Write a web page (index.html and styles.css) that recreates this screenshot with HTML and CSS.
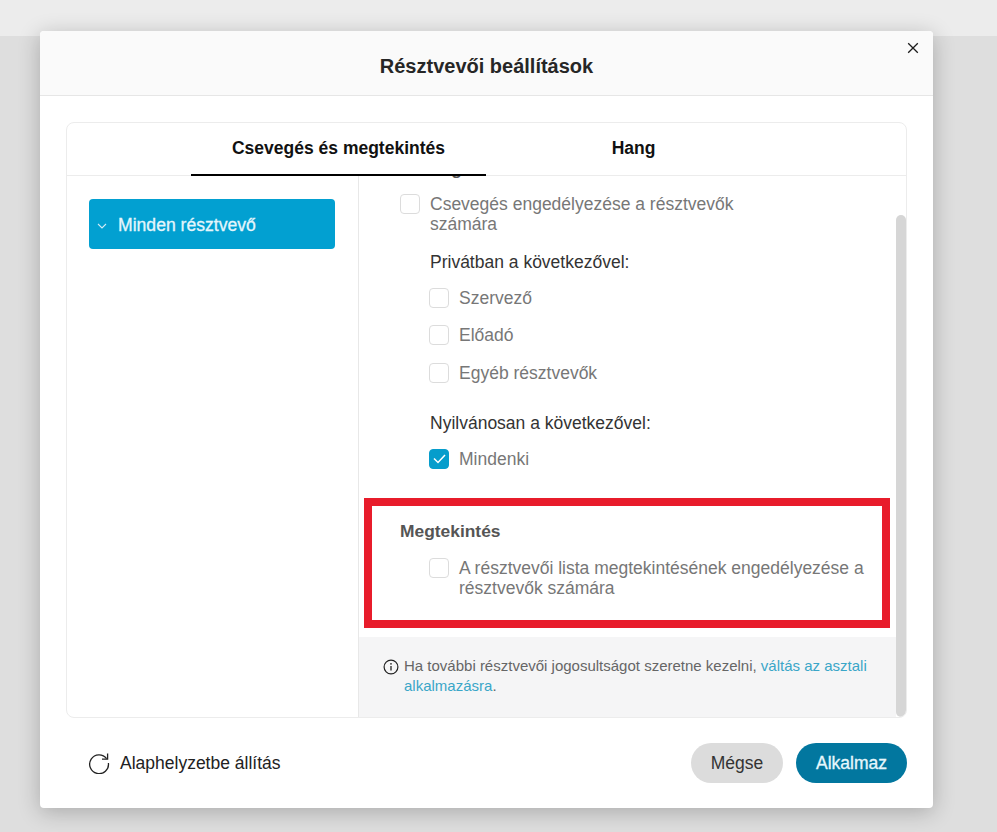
FILE: index.html
```html
<!DOCTYPE html>
<html lang="hu">
<head>
<meta charset="utf-8">
<title>Résztvevői beállítások</title>
<link rel="stylesheet" href="styles.css">
</head>
<body>
<div class="topbar"></div>
<div class="modal">
  <header class="modal-head">
    <h1>Résztvevői beállítások</h1>
    <button class="close" aria-label="Bezárás">
      <svg width="12" height="12" viewBox="0 0 12 12"><path d="M1.2 1.2 10.8 10.8M10.8 1.2 1.2 10.8" stroke="#1c1c1c" stroke-width="1.3" fill="none"/></svg>
    </button>
  </header>
  <div class="modal-body">
    <div class="card">
      <nav class="tabs">
        <div class="tab tab-active">Csevegés és megtekintés</div>
        <div class="tab tab-plain">Hang</div>
      </nav>
      <div class="panes">
        <aside class="side">
          <div class="side-item">
            <svg class="chev" width="10" height="6" viewBox="0 0 10 6"><path d="M1 1 5 5 9 1" stroke="#cfeaf5" stroke-width="1.1" fill="none"/></svg>
            <span>Minden résztvevő</span>
          </div>
        </aside>
        <section class="main">
          <div class="scroll">
            <div class="clip-strip"><h2 class="sec-title sec-clipped">Csevegés</h2></div>
            <label class="check check-top"><i class="box"></i><span class="narrow">Csevegés engedélyezése a résztvevők számára</span></label>
            <div class="group">
              <p class="group-title">Privátban a következővel:</p>
              <label class="check"><i class="box"></i><span>Szervező</span></label>
              <label class="check"><i class="box"></i><span>Előadó</span></label>
              <label class="check"><i class="box"></i><span>Egyéb résztvevők</span></label>
            </div>
            <div class="group group-2">
              <p class="group-title">Nyilvánosan a következővel:</p>
              <label class="check"><i class="box box-on"><svg width="15" height="13" viewBox="0 0 15 13"><path d="M2 6.5 6 10.5 13 3" stroke="#fff" stroke-width="1.5" fill="none"/></svg></i><span>Mindenki</span></label>
            </div>
            <h2 class="sec-title sec-view">Megtekintés</h2>
            <label class="check check-view"><i class="box"></i><span>A résztvevői lista megtekintésének engedélyezése a résztvevők számára</span></label>
            <div class="note">
              <svg class="info" width="16" height="16" viewBox="0 0 16 16"><circle cx="8" cy="8" r="6.9" stroke="#222" stroke-width="1.2" fill="none"/><path d="M8 7v4.6" stroke="#222" stroke-width="1.3"/><circle cx="8" cy="4.8" r=".85" fill="#222"/></svg>
              <p>Ha további résztvevői jogosultságot szeretne kezelni, <a href="#">váltás az asztali alkalmazásra</a>.</p>
            </div>
          </div>
          <div class="scrollbar"></div>
        </section>
      </div>
    </div>
  </div>
  <footer class="modal-foot">
    <div class="reset">
      <svg width="22" height="22" viewBox="0 0 22 22"><path d="M18.6 6.6A9.4 9.4 0 1 0 20.4 11" stroke="#222" stroke-width="1.3" fill="none"/><path d="M19.6 1.6v5.6h-5.6" stroke="#222" stroke-width="1.3" fill="none"/></svg>
      <span>Alaphelyzetbe állítás</span>
    </div>
    <div class="actions">
      <button class="btn btn-cancel">Mégse</button>
      <button class="btn btn-apply">Alkalmaz</button>
    </div>
  </footer>
</div>
<div class="highlight"></div>
</body>
</html>
```
FILE: styles.css
```css
* { box-sizing: border-box; }
html, body { margin: 0; height: 100%; }
body {
  height: 832px;
  overflow: hidden;
  background: #dedede;
  font-family: "Liberation Sans", Arial, sans-serif;
  color: #222;
  position: relative;
}
.topbar { height: 36px; background: #ececec; }
.modal {
  position: absolute;
  left: 40px;
  top: 31px;
  width: 893px;
  height: 777px;
  background: #fff;
  border-radius: 4px;
  box-shadow: 0 4px 22px rgba(0, 0, 0, .24);
  display: flex;
  flex-direction: column;
}
.modal-head {
  height: 65px;
  flex: none;
  background: #fafafa;
  border-bottom: 1px solid #e6e6e6;
  border-radius: 4px 4px 0 0;
  display: flex;
  align-items: center;
  justify-content: center;
  padding-top: 6px;
  position: relative;
}
.modal-head h1 { margin: 0; font-size: 20px; font-weight: 700; color: #262626; }
.close {
  position: absolute;
  right: 14px;
  top: 11px;
  width: 12px;
  height: 12px;
  padding: 0;
  border: 0;
  background: none;
  display: flex;
}
.modal-body { padding: 26px 26px 0; flex: none; }
.card {
  width: 841px;
  height: 596px;
  border: 1px solid #ececec;
  border-radius: 8px;
  display: flex;
  flex-direction: column;
  overflow: hidden;
}
.tabs {
  height: 53px;
  flex: none;
  border-bottom: 1px solid #ececec;
  display: flex;
  padding-left: 124px;
}
.tab {
  font-size: 17.5px;
  font-weight: 700;
  color: #111;
  height: 53px;
  display: flex;
  align-items: center;
  justify-content: center;
  padding-bottom: 1px;
}
.tab-active { width: 295px; border-bottom: 2px solid #000; }
.tab-plain { width: 295px; padding-bottom: 3px; }
.panes { flex: 1; display: flex; min-height: 0; }
.side { width: 292px; flex: none; border-right: 1px solid #e8e8e8; padding: 23px 23px 0 22px; }
.side-item {
  height: 50px;
  width: 246px;
  background: #02a0d1;
  border-radius: 4px;
  color: #e4f6fc;
  font-size: 17.6px;
  font-weight: 400;
  display: flex;
  align-items: center;
  padding: 2px 0 0 8px;
  gap: 11px;
  -webkit-text-stroke: .3px #e4f6fc;
}
.chev { margin-top: 2px; }
.main { flex: 1; position: relative; min-width: 0; }
.scroll { height: 100%; overflow: hidden; color: #777; font-size: 17.5px; }
.clip-strip { height: 3px; overflow: hidden; }
.sec-title { margin: 0 0 0 41px; font-size: 17.4px; line-height: 20px; font-weight: 700; color: #555; }
.sec-clipped { margin-top: -17px; height: 20px; }
.check { display: flex; align-items: flex-start; gap: 10px; line-height: 20px; }
.check-top { margin: 15px 0 0 41px; }
.narrow { width: 320px; }
.box {
  width: 20px;
  height: 20px;
  flex: none;
  border: 1px solid #dcdcdc;
  border-radius: 4px;
  background: #fff;
  display: flex;
  align-items: center;
  justify-content: center;
}
.box-on { background: #069dcc; border-color: #069dcc; }
.group { margin: 18px 0 0 71px; }
.group-title { margin: 0 0 16px; line-height: 20px; color: #333; }
.group .check { margin: 0 0 17.25px -1px; }
.group-2 { margin-top: 30.25px; }
.sec-view { margin-top: 52px; }
.check-view { margin: 17px 24px 0 70px; }
.note {
  margin-top: 39px;
  width: 537px;
  height: 80px;
  background: #f5f5f6;
  padding: 19px 24px 0 24px;
  display: flex;
  gap: 5px;
  font-size: 15px;
  line-height: 20px;
  color: #666;
}
.note p { margin: 0; }
.note a { color: #3aa6c8; text-decoration: none; }
.info { flex: none; margin-top: 3px; }
.scrollbar {
  position: absolute;
  right: 0;
  top: 39px;
  bottom: 0;
  width: 10px;
  background: #d6d6d6;
  border-radius: 5px;
}
.modal-foot {
  flex: 1;
  display: flex;
  align-items: center;
  justify-content: space-between;
  padding: 0 26px 0 48px;
}
.reset { display: flex; align-items: center; gap: 10px; font-size: 17.5px; color: #222; }
.actions { display: flex; gap: 13px; }
.btn {
  height: 40px;
  border: 0;
  border-radius: 20px;
  font-family: inherit;
  font-size: 17.5px;
  padding: 0;
}
.btn-cancel { width: 92px; background: #dcdcdc; color: #333; }
.btn-apply { width: 111px; background: #02779f; color: #e7f7fc; -webkit-text-stroke: .3px #e7f7fc; }
.highlight {
  position: absolute;
  left: 364px;
  top: 498px;
  width: 526px;
  height: 130px;
  border: 8px solid #e81c2b;
  pointer-events: none;
}
```
